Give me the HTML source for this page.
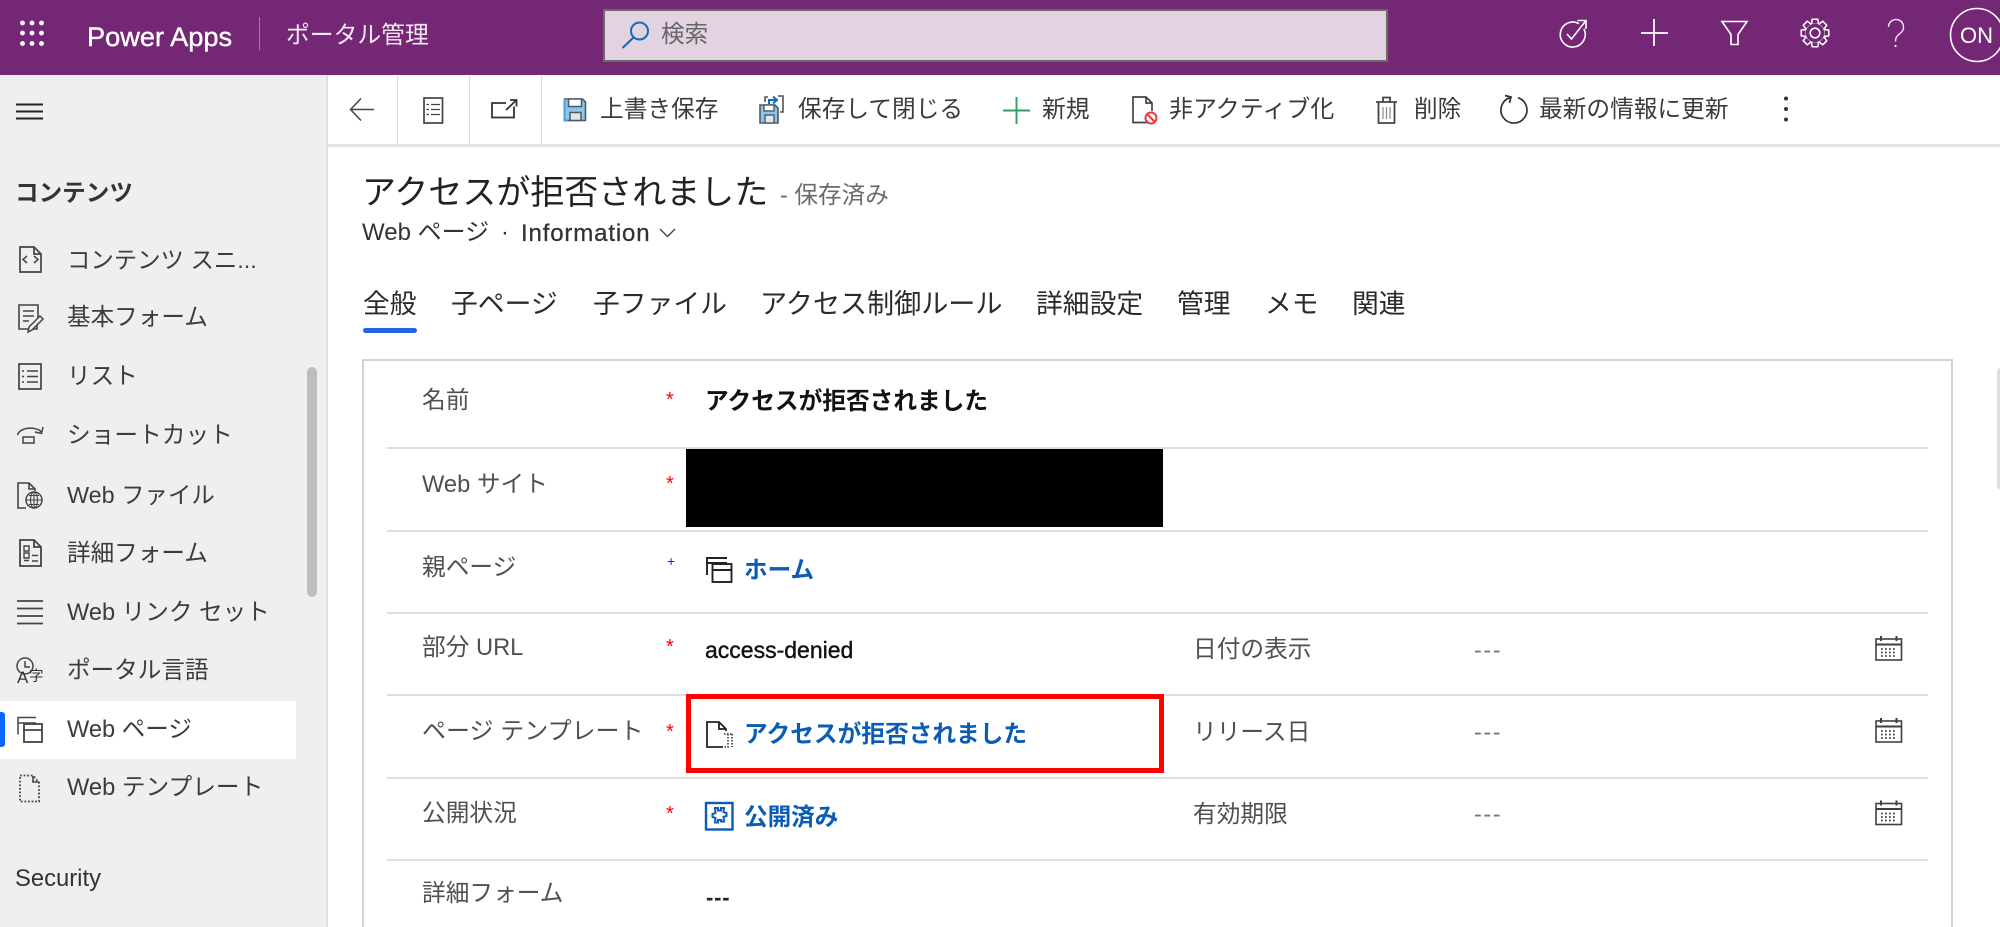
<!DOCTYPE html>
<html lang="ja"><head><meta charset="utf-8"><title>Power Apps ポータル管理</title>
<style>
html{margin:0;padding:0;background:#fff;overflow:hidden;width:2000px;height:927px}
body{margin:0;padding:0;background:#fff;width:2000px;height:927px;position:relative;overflow:hidden;font-family:"Liberation Sans","Noto Sans CJK JP",sans-serif;color:#3a3a3a}
.b{position:absolute}
.t{position:absolute;white-space:nowrap;line-height:40px;height:40px;font-size:23.6px}
.nav{color:#3c3c3c;left:67px}
.lab{color:#505050;left:422px;font-size:23.7px}
.lab2{color:#505050;left:1193px}
.ast{color:#f00;left:666px;font-size:20px}
.val{left:705px;font-weight:700}
.lnk{left:744px;font-weight:700;color:#0b5cb5}
.dash{left:1474px;color:#777;letter-spacing:1.5px}
.tab{font-size:26.8px;color:#2b2b2b}
.tb{color:#3b3b3b}
.line{position:absolute;left:387px;width:1541px;height:2px;background:#dedede}
svg{position:absolute;left:0;top:0}
</style></head>
<body>
<div class="b" style="left:0;top:0;width:2000px;height:75px;background:#742774"></div>
<div class="b" style="left:259px;top:17px;width:1px;height:33px;background:#a67ba6"></div>
<div class="b" style="left:603px;top:9px;width:781px;height:49px;background:#e3d3e2;border:2px solid #6d6d66"></div>

<div class="b" style="left:0;top:75px;width:326px;height:852px;background:#efefef;border-right:2px solid #dfdfdf"></div>
<div class="b" style="left:328px;top:144px;width:1672px;height:3px;background:#e2e2e2"></div>
<div class="b" style="left:397px;top:75px;width:1px;height:69px;background:#dcdcdc"></div>
<div class="b" style="left:469px;top:75px;width:1px;height:69px;background:#dcdcdc"></div>
<div class="b" style="left:541px;top:75px;width:1px;height:69px;background:#dcdcdc"></div>

<div class="b" style="left:0;top:701px;width:296px;height:58px;background:#fff"></div>
<div class="b" style="left:0;top:712px;width:5px;height:35px;background:#0a66ff;border-radius:0 3px 3px 0"></div>
<div class="b" style="left:307px;top:367px;width:10px;height:230px;background:#bdbdbd;border-radius:5px"></div>
<div class="b" style="left:1997px;top:368px;width:3px;height:121px;background:#dedede;border-radius:3px 0 0 3px"></div>

<div class="t" style="left:87px;top:17px;font-size:27.2px;color:#fff;-webkit-text-stroke:.4px #fff">Power Apps</div>
<div class="t" style="left:286px;top:16px;font-size:23.8px;color:#f4eaf4">ポータル管理</div>
<div class="t" style="left:661px;top:15px;color:#666">検索</div>
<div class="t" style="left:1960px;top:16px;font-size:22px;color:#fff">ON</div>

<div class="t tb" style="left:600px;top:90px;font-size:23.7px">上書き保存</div>
<div class="t tb" style="left:798px;top:90px;font-size:23.7px">保存して閉じる</div>
<div class="t tb" style="left:1042px;top:90px;font-size:23.8px">新規</div>
<div class="t tb" style="left:1169px;top:90px;font-size:24px">非アクティブ化</div>
<div class="t tb" style="left:1414px;top:90px;font-size:23.6px">削除</div>
<div class="t tb" style="left:1539px;top:90px;font-size:23.7px">最新の情報に更新</div>

<div class="t" style="left:15px;top:174px;font-weight:700;font-size:23.6px;color:#333">コンテンツ</div>
<div class="t nav" style="top:240px;font-size:23.4px">コンテンツ スニ...</div>
<div class="t nav" style="top:298px">基本フォーム</div>
<div class="t nav" style="top:357px">リスト</div>
<div class="t nav" style="top:416px;font-size:23.7px">ショートカット</div>
<div class="t nav" style="top:475px;font-size:23.4px">Web ファイル</div>
<div class="t nav" style="top:534px">詳細フォーム</div>
<div class="t nav" style="top:593px;font-size:23.6px">Web リンク セット</div>
<div class="t nav" style="top:651px">ポータル言語</div>
<div class="t nav" style="top:710px">Web ページ</div>
<div class="t nav" style="top:768px;font-size:23.7px">Web テンプレート</div>
<div class="t" style="left:15px;top:859px;color:#333;font-size:23.8px">Security</div>

<div class="t" style="left:362px;top:173px;font-size:34px;color:#222">アクセスが拒否されました</div>
<div class="t" style="left:780px;top:176px;color:#6b6b6b">- 保存済み</div>
<div class="t" style="left:362px;top:213px;color:#333;font-size:24px">Web ページ</div>
<div class="t" style="left:501px;top:213px;color:#333">·</div>
<div class="t" style="left:521px;top:214px;color:#333;font-size:24px;letter-spacing:.85px;-webkit-text-stroke:.3px #333">Information</div>

<div class="t tab" style="left:363px;top:283.5px">全般</div>
<div class="t tab" style="left:451px;top:283.5px">子ページ</div>
<div class="t tab" style="left:593px;top:283.5px">子ファイル</div>
<div class="t tab" style="left:760px;top:283.5px;font-size:27.1px">アクセス制御ルール</div>
<div class="t tab" style="left:1036px;top:283.5px">詳細設定</div>
<div class="t tab" style="left:1177px;top:283.5px">管理</div>
<div class="t tab" style="left:1265px;top:283.5px">メモ</div>
<div class="t tab" style="left:1352px;top:283.5px">関連</div>
<div class="b" style="left:363px;top:328px;width:54px;height:5px;background:#2266e3;border-radius:3px"></div>

<div class="b" style="left:362px;top:359px;width:1591px;height:610px;border:2px solid #d2d2d2;box-sizing:border-box"></div>
<div class="line" style="top:447px"></div>
<div class="line" style="top:530px"></div>
<div class="line" style="top:612px"></div>
<div class="line" style="top:694px"></div>
<div class="line" style="top:777px"></div>
<div class="line" style="top:859px"></div>

<div class="b" style="left:686px;top:449px;width:477px;height:78px;background:#000"></div>
<div class="b" style="left:686px;top:694px;width:478px;height:79px;border:5px solid #f00;box-sizing:border-box"></div>

<div class="t lab" style="top:381px">名前</div>
<div class="t lab" style="top:465px">Web サイト</div>
<div class="t lab" style="top:548px">親ページ</div>
<div class="t lab" style="top:628px">部分 URL</div>
<div class="t lab" style="top:712px;font-size:24px">ページ テンプレート</div>
<div class="t lab" style="top:794px">公開状況</div>
<div class="t lab" style="top:874px">詳細フォーム</div>

<div class="t ast" style="top:380px">*</div>
<div class="t ast" style="top:464px">*</div>
<div class="t" style="left:667px;top:541px;color:#22c;font-size:14px">+</div>
<div class="t ast" style="top:627px">*</div>
<div class="t ast" style="top:712px">*</div>
<div class="t ast" style="top:794px">*</div>

<div class="t val" style="top:381.5px;color:#111;font-size:23.7px">アクセスが拒否されました</div>
<div class="t lnk" style="top:551px">ホーム</div>
<div class="t" style="left:705px;top:630px;color:#111;font-size:23px;-webkit-text-stroke:.4px #111">access-denied</div>
<div class="t lnk" style="top:715px;font-size:23.7px">アクセスが拒否されました</div>
<div class="t lnk" style="top:797.5px">公開済み</div>
<div class="t" style="left:706px;top:878px;color:#222;font-weight:700;font-size:22px;letter-spacing:.8px">---</div>

<div class="t lab2" style="top:630px;font-size:23.7px">日付の表示</div>
<div class="t lab2" style="top:713px;font-size:23.7px">リリース日</div>
<div class="t lab2" style="top:795px;font-size:23.7px">有効期限</div>
<div class="t dash" style="top:631px">---</div>
<div class="t dash" style="top:713px">---</div>
<div class="t dash" style="top:795px">---</div>

<svg width="2000" height="927" viewBox="0 0 2000 927" fill="none">
<!-- waffle -->
<g fill="#fff"><circle cx="22.5" cy="23" r="2.4"/><circle cx="32" cy="23" r="2.4"/><circle cx="41.5" cy="23" r="2.4"/><circle cx="22.5" cy="33" r="2.4"/><circle cx="32" cy="33" r="2.4"/><circle cx="41.5" cy="33" r="2.4"/><circle cx="22.5" cy="43.5" r="2.4"/><circle cx="32" cy="43.5" r="2.4"/><circle cx="41.5" cy="43.5" r="2.4"/></g>
<!-- search -->
<g stroke="#0f6cbd" stroke-width="2"><circle cx="639.5" cy="31" r="8.5"/><path d="M633.5 37.5L622.5 48"/></g>
<!-- header right -->
<g stroke="#fff" stroke-width="1.6">
<path d="M1579 23.700a12.500 12.500 0 1 0 4.800 5"/><path d="M1567 34l4.500 5L1586 20.500"/><path d="M1577.500 20.500h8.500v8.500"/>
<path d="M1654 19v27M1641 33h27" stroke-width="1.8"/>
<path d="M1722 21.500h25l-9 13v10h-7v-10z"/>
<circle cx="1815" cy="33" r="4.800"/><circle cx="1815" cy="33" r="10"/>
<path d="M1888.500 27a7.500 7.500 0 1 1 12 6c-3 2.500-5 4-5 8.500" stroke-width="1.400" stroke="#f3e8f3"/>
</g>
<circle cx="1895.500" cy="46" r="1.100" fill="#fff"/>
<g fill="#742774" stroke="#fff" stroke-width="1.5">
<path d="M1811.500 23.500l.7-4.300h5.600l.7 4.300"/>
<path d="M1811.500 23.500l.7-4.300h5.600l.7 4.300" transform="rotate(45 1815 33)"/>
<path d="M1811.500 23.500l.7-4.300h5.600l.7 4.300" transform="rotate(90 1815 33)"/>
<path d="M1811.500 23.500l.7-4.300h5.600l.7 4.300" transform="rotate(135 1815 33)"/>
<path d="M1811.500 23.500l.7-4.300h5.600l.7 4.300" transform="rotate(180 1815 33)"/>
<path d="M1811.500 23.500l.7-4.300h5.600l.7 4.300" transform="rotate(225 1815 33)"/>
<path d="M1811.500 23.500l.7-4.300h5.600l.7 4.300" transform="rotate(270 1815 33)"/>
<path d="M1811.500 23.500l.7-4.300h5.600l.7 4.300" transform="rotate(315 1815 33)"/>
</g>
<circle cx="1977" cy="35" r="26.5" stroke="#fff" stroke-width="1.6"/>
<!-- hamburger -->
<path d="M16 104.500h27M16 111.500h27M16 118.500h27" stroke="#222" stroke-width="2"/>
<!-- back -->
<path d="M374 109.500h-22M361 98.500l-10.500 11 10.500 11" stroke="#444" stroke-width="1.5"/>
<!-- form icon -->
<g stroke="#444" stroke-width="1.7"><rect x="424" y="98" width="18.500" height="25"/><path d="M431 104.500h9M431 109.500h9M431 114.500h9" stroke-width="1.300"/><path d="M426.500 104.500h2.500M426.500 109.500h2.500M426.500 114.500h2.500" stroke-width="1.300"/></g>
<!-- popout -->
<path d="M506 103h-14v14.500h22v-11M506 110l10-9.500M510 100h6.500v6.500" stroke="#333" stroke-width="1.800"/>
<!-- save -->
<path d="M564.500 99h18l3 3v18.500h-21z" fill="#8cc5ec" stroke="#4c5a66" stroke-width="1.600"/>
<path d="M564.500 99v21.500h3" stroke="#4a9fe0" stroke-width="2"/>
<rect x="568.500" y="99" width="13" height="7.500" fill="#fff" stroke="#4c5a66" stroke-width="1.500"/>
<rect x="570" y="112.500" width="11" height="8" fill="#e4e4e4" stroke="#4c5a66" stroke-width="1.500"/>
<!-- save close -->
<path d="M760 105h15l3 3v15h-18z" fill="#8cc5ec" stroke="#4c5a66" stroke-width="1.600"/>
<rect x="764" y="105" width="10" height="6" fill="#fff" stroke="#4c5a66" stroke-width="1.400"/>
<rect x="765" y="115" width="9" height="8" fill="#e4e4e4" stroke="#4c5a66" stroke-width="1.400"/>
<path d="M765 102v-5h3M778 96h5v16h-3" stroke="#555" stroke-width="1.600"/>
<path d="M769 104v-4h8M773 96.500l4 3.500-4 3.500" stroke="#0f6cbd" stroke-width="2"/>
<!-- new -->
<path d="M1016.500 97v27M1003 110.500h27" stroke="#2f9e5f" stroke-width="1.900"/>
<!-- deactivate -->
<path d="M1148 122.500h-15V97h13l6 6v8M1146 97v6h6" stroke="#444" stroke-width="1.700"/>
<circle cx="1151" cy="118" r="5.500" fill="#fff" stroke="#ee3a3a" stroke-width="2"/><path d="M1147 114l8 8" stroke="#ee3a3a" stroke-width="2"/>
<!-- trash -->
<path d="M1376 102h21M1383 102v-4.500h7v4.500M1378.500 102v21h16v-21" stroke="#444" stroke-width="1.800"/>
<path d="M1383 107v12M1386.500 107v12M1390 107v12" stroke="#888" stroke-width="1.200"/>
<!-- refresh -->
<path d="M1518 97.700A13 13 0 1 1 1510.500 97.500" stroke="#333" stroke-width="1.700"/><path d="M1505 95.500l6 1.500-1.500 6" stroke="#333" stroke-width="1.700"/>
<!-- more -->
<g fill="#333"><circle cx="1786" cy="98.500" r="2"/><circle cx="1786" cy="109" r="2"/><circle cx="1786" cy="119.500" r="2"/></g>
<!-- chevron -->
<path d="M660 229l7.500 7.500 7.500-7.500" stroke="#444" stroke-width="1.400"/>
<!-- sidebar icons -->
<g stroke="#444" stroke-width="1.700">
<path d="M20 247h14l7 7v18H20zM34 247v7h7"/><path d="M27 256l-4 3.500 4 3.500M34 256l4 3.500-4 3.500" stroke-width="1.500"/>
<path d="M37 319v10H19v-24h19v13M23 311h11M23 316h11M23 321h6" stroke-width="1.600"/><path d="M28 332l1-5 11-11 3 3-11 11z" fill="#efefef" stroke-width="1.500"/>
<rect x="19" y="364" width="22" height="25"/><path d="M27 371h11M27 376.500h11M27 382h11M22 371h2M22 376.500h2M22 382h2" stroke-width="1.400"/>
<path d="M17.500 435a13 8 0 0 1 24-3M43 427l-1.500 6.500-6.500-1.500" stroke-width="1.500"/><rect x="23" y="437" width="11" height="6" stroke-width="1.500"/>
<path d="M26 508h-8v-25h11l6 6v2M29 483v6h6" stroke-width="1.600"/><circle cx="34" cy="500" r="8" fill="#efefef" stroke-width="1.500"/><path d="M26 500h16M34 492v16M29 495.500h10M29 504.500h10" stroke-width="1.100"/><ellipse cx="34" cy="500" rx="3.500" ry="8" stroke-width="1.100"/>
<path d="M20 540h14l7 7v19H20zM34 540v7h7" stroke-width="1.800"/><path d="M24 546h5v5h-5zM24 553h5v5h-5zM32 555.500h6M32 561h6M24 560.500h5" stroke-width="1.400"/>
<path d="M17 601h26M17 608.500h26M17 616h26M17 623.500h26" stroke-width="1.800"/>
<circle cx="25" cy="666" r="8" stroke-width="1.500"/><path d="M25 661v6h5" stroke-width="1.500"/>
<path d="M36 717.500H18v17M18 723h18" stroke-width="1.500" /><rect x="24" y="724" width="18" height="18" fill="#fff" stroke-width="1.800"/><path d="M24 730h18" stroke-width="1.800"/>
<path d="M20 775.500h13l6 7v19H20z" stroke-width="1.800" stroke-dasharray="1.800 1.800"/><path d="M33 776v6h6" stroke-width="1.600"/>
</g>
<!-- home icon -->
<g stroke="#222" stroke-width="1.900"><path d="M727 558h-20v17M707 563h20"/><rect x="712.500" y="564" width="19" height="18" fill="#fff"/><path d="M712.500 570h19"/></g>
<!-- template -->
<path d="M723 747h-16v-25h12l7 7v2M719 722v7h7" stroke="#222" stroke-width="1.800"/>
<path d="M728 734v13h-5M732 734v13M724 734h8" stroke="#333" stroke-width="1.600" stroke-dasharray="1.500 1.500"/>
<!-- published -->
<rect x="706" y="803" width="26.500" height="26.500" stroke="#0b5cb5" stroke-width="2.400"/>
<path d="M715 808h3v2.500h3V808h3l-.5 4 3 1v3l-3 1 .5 4.500h-3V820h-3v2.500h-3l.5-4.500-3-1v-3l3-1z" stroke="#0b5cb5" stroke-width="2"/>
<!-- calendars -->
<g stroke="#3f3f46" stroke-width="1.600">
<rect x="1876" y="639" width="25.500" height="21"/><path d="M1876 644.500h25.500M1881 636v5M1896.500 636v5" stroke-width="2"/><path d="M1881 649h16M1881 652.500h16M1881 656h16" stroke-width="1.700" stroke-dasharray="1.700 2.300"/>
<rect x="1876" y="721" width="25.500" height="21"/><path d="M1876 726.500h25.500M1881 718v5M1896.500 718v5" stroke-width="2"/><path d="M1881 731h16M1881 734.500h16M1881 738h16" stroke-width="1.700" stroke-dasharray="1.700 2.300"/>
<rect x="1876" y="803.500" width="25.500" height="21"/><path d="M1876 809h25.500M1881 800.500v5M1896.500 800.500v5" stroke-width="2"/><path d="M1881 813.500h16M1881 817h16M1881 820.500h16" stroke-width="1.700" stroke-dasharray="1.700 2.300"/>
</g>
</svg>
<div class="t" style="left:17px;top:658px;font-size:17px;color:#333;line-height:40px">A</div>
<div class="t" style="left:29px;top:657px;font-size:14.5px;color:#333">字</div>
</body></html>
